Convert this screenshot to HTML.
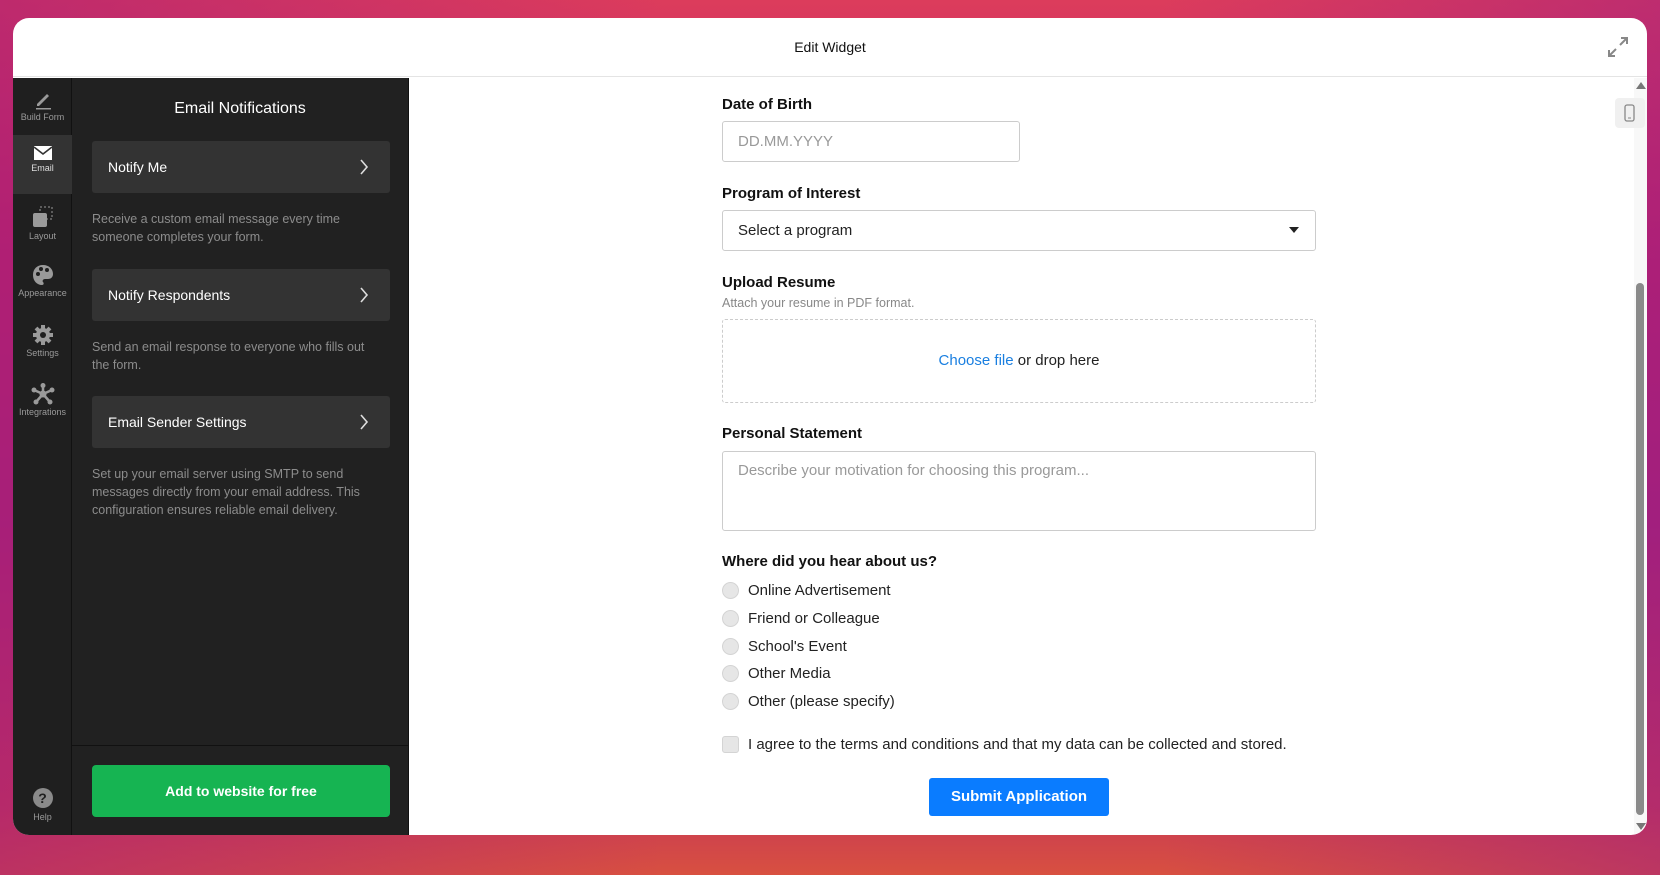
<!DOCTYPE html>
<html><head><meta charset="utf-8"><style>
*{box-sizing:border-box;margin:0;padding:0}
body{width:1660px;height:875px;overflow:hidden;font-family:"Liberation Sans",sans-serif;
background:linear-gradient(180deg,#dc3c5c 0%,#b8206e 30%,#a3207a 60%,#c83a55 92%,#d85040 100%);position:relative}
.bgl{position:absolute;inset:0;background:linear-gradient(90deg,rgba(170,30,120,.6),rgba(0,0,0,0) 40%,rgba(0,0,0,0) 70%,rgba(160,30,130,.5))}
.card{position:absolute;left:13px;top:18px;width:1634px;height:817px;background:#fff;border-radius:16px;overflow:hidden}
.hdr{height:59px;border-bottom:1px solid #e4e4e4;text-align:center;font-size:14px;line-height:59px;color:#111}
.icons{position:absolute;left:0;top:60px;width:59px;bottom:0;background:#1f1f1f;border-right:1px solid #111}
.ic{position:absolute;left:0;width:59px;text-align:center;color:#9a9a9a;font-size:9px}
.panel{position:absolute;left:59px;top:60px;width:337px;bottom:0;background:#212121;border-right:1px solid #111}
.ptitle{position:absolute;top:22px;width:100%;text-align:center;color:#fff;font-size:16px}
.item{position:absolute;left:20px;width:298px;height:52px;background:#333;border-radius:3px;color:#fff;font-size:14px;line-height:52px;padding-left:16px}
.item svg{position:absolute;right:21px;top:17px}
.desc{position:absolute;left:20px;width:290px;color:#8c8c8c;font-size:12.5px;line-height:18px}
.div{position:absolute;left:0;right:0;top:667px;border-top:1px solid #111}
.green{position:absolute;left:20px;top:687px;width:298px;height:52px;background:#16b452;border-radius:4px;color:#fff;font-weight:bold;font-size:14px;text-align:center;line-height:52px}
.f{position:absolute;left:709px;color:#111}
.lab{font-weight:bold;font-size:15px}
.inp{position:absolute;left:709px;border:1px solid #ccc;border-radius:3px;color:#999;font-size:15px;padding-left:15px}
.r{position:absolute;left:709px;font-size:15px;color:#222}
.r i{position:absolute;left:0;top:0;width:17px;height:17px;border-radius:50%;background:#e6e6e6;border:1px solid #d4d4d4}
.r span{position:absolute;left:26px;white-space:nowrap}
</style></head><body><div class="bgl"></div>
<div class="card">
<div class="hdr">Edit Widget</div>
<svg style="position:absolute;right:18px;top:18px" width="22" height="22" viewBox="0 0 22 22" fill="none" stroke="#888" stroke-width="2"><path d="M13 9l7-7M14 2h6v6M9 13l-7 7M2 14v6h6"/></svg>
<div class="icons">
 <div class="ic" style="top:12px"><svg width="20" height="20" viewBox="0 0 20 20"><path d="M4 14L14 4l2 2L6 16H4z" fill="#9a9a9a"/><rect x="3" y="18" width="15" height="1.5" fill="#9a9a9a"/></svg><div>Build Form</div></div>
 <div class="ic" style="top:57px;height:59px;background:#333;color:#ddd"><svg style="margin-top:10px" width="20" height="16" viewBox="0 0 20 16"><rect x="1" y="1" width="18" height="14" fill="#fff"/><path d="M1 2l9 7 9-7" stroke="#333" stroke-width="1.6" fill="none"/></svg><div>Email</div></div>
 <div class="ic" style="top:127px"><svg width="24" height="24" viewBox="0 0 24 24"><rect x="9" y="2" width="12" height="12" fill="none" stroke="#9a9a9a" stroke-dasharray="2 2"/><rect x="2" y="8" width="14" height="14" rx="2" fill="#9a9a9a"/></svg><div>Layout</div></div>
 <div class="ic" style="top:186px"><svg width="22" height="22" viewBox="0 0 22 22"><path d="M11 1C5 1 1 5 1 11s4 10 9 10c2 0 2-2 1-3s0-3 2-3h3c3 0 5-2 5-5 0-5-4-9-10-9z" fill="#9a9a9a"/><circle cx="6" cy="10" r="2" fill="#1f1f1f"/><circle cx="9" cy="5" r="2" fill="#1f1f1f"/><circle cx="15" cy="6" r="2" fill="#1f1f1f"/></svg><div>Appearance</div></div>
 <div class="ic" style="top:246px"><svg width="22" height="22" viewBox="0 0 22 22"><circle cx="11" cy="11" r="7" fill="#9a9a9a"/><g stroke="#9a9a9a" stroke-width="4"><path d="M11 1v20M1 11h20M4 4l14 14M18 4L4 18"/></g><circle cx="11" cy="11" r="3" fill="#1f1f1f"/></svg><div>Settings</div></div>
 <div class="ic" style="top:305px"><svg width="24" height="22" viewBox="0 0 24 22"><g stroke="#9a9a9a" stroke-width="2.5"><path d="M12 11L12 2M12 11L3 7M12 11L21 7M12 11L5 19M12 11L19 19"/></g><circle cx="12" cy="11" r="3.5" fill="#9a9a9a"/><circle cx="12" cy="2.5" r="2.5" fill="#9a9a9a"/><circle cx="3" cy="7" r="2.5" fill="#9a9a9a"/><circle cx="21" cy="7" r="2.5" fill="#9a9a9a"/><circle cx="5" cy="19" r="2.5" fill="#9a9a9a"/><circle cx="19" cy="19" r="2.5" fill="#9a9a9a"/></svg><div>Integrations</div></div>
 <div class="ic" style="top:710px"><div style="width:20px;height:20px;border-radius:50%;background:#8a8a8a;color:#1f1f1f;font-weight:bold;font-size:14px;line-height:20px;margin:0 auto 4px">?</div><div>Help</div></div>
</div>
<div class="panel">
 <div class="ptitle">Email Notifications</div>
 <div class="item" style="top:63px">Notify Me<svg width="10" height="18" viewBox="0 0 10 18"><path d="M2 2l6 7-6 7" stroke="#ddd" stroke-width="1.6" fill="none"/></svg></div>
 <div class="desc" style="top:132px">Receive a custom email message every time someone completes your form.</div>
 <div class="item" style="top:191px">Notify Respondents<svg width="10" height="18" viewBox="0 0 10 18"><path d="M2 2l6 7-6 7" stroke="#ddd" stroke-width="1.6" fill="none"/></svg></div>
 <div class="desc" style="top:260px">Send an email response to everyone who fills out the form.</div>
 <div class="item" style="top:318px">Email Sender Settings<svg width="10" height="18" viewBox="0 0 10 18"><path d="M2 2l6 7-6 7" stroke="#ddd" stroke-width="1.6" fill="none"/></svg></div>
 <div class="desc" style="top:387px">Set up your email server using SMTP to send messages directly from your email address. This configuration ensures reliable email delivery.</div>
 <div class="div"></div>
 <div class="green">Add to website for free</div>
</div>
<div class="f lab" style="top:78px">Date of Birth</div>
<div class="inp" style="top:103px;width:298px;height:41px;line-height:39px">DD.MM.YYYY</div>
<div class="f lab" style="top:167px">Program of Interest</div>
<div class="inp" style="top:192px;width:594px;height:41px;line-height:39px;color:#222">Select a program<svg style="position:absolute;right:16px;top:16px" width="10" height="6" viewBox="0 0 10 6"><path d="M0 0h10L5 6z" fill="#222"/></svg></div>
<div class="f lab" style="top:256px">Upload Resume</div>
<div class="f" style="top:278px;font-size:12.5px;color:#888">Attach your resume in PDF format.</div>
<div class="inp" style="top:301px;width:594px;height:84px;border:1px dashed #ccc;text-align:center;line-height:82px;color:#222;padding:0">
<span style="color:#1a7fe0">Choose file</span> or drop here</div>
<div class="f lab" style="top:407px">Personal Statement</div>
<div class="inp" style="top:433px;width:594px;height:80px;padding-top:10px">Describe your motivation for choosing this program...</div>
<div class="f lab" style="top:535px">Where did you hear about us?</div>
<div class="r" style="top:564px"><i></i><span>Online Advertisement</span></div>
<div class="r" style="top:592px"><i></i><span>Friend or Colleague</span></div>
<div class="r" style="top:620px"><i></i><span>School's Event</span></div>
<div class="r" style="top:647px"><i></i><span>Other Media</span></div>
<div class="r" style="top:675px"><i></i><span>Other (please specify)</span></div>
<div class="r" style="top:718px"><i style="border-radius:3px"></i><span>I agree to the terms and conditions and that my data can be collected and stored.</span></div>
<div style="position:absolute;left:916px;top:760px;width:180px;height:38px;background:#0a7cff;border-radius:3px;color:#fff;font-weight:bold;font-size:15px;text-align:center;line-height:38px">Submit Application</div>
<div style="position:absolute;left:1621px;top:60px;width:13px;bottom:0;background:#f8f8f8"></div>
<svg style="position:absolute;left:1623px;top:64px" width="10" height="7"><path d="M0 7L5 0l5 7z" fill="#777"/></svg>
<div style="position:absolute;left:1623px;top:265px;width:8px;height:532px;background:#8a8a8a;border-radius:4px"></div>
<svg style="position:absolute;left:1623px;top:805px" width="10" height="7"><path d="M0 0h10L5 7z" fill="#777"/></svg>
<div style="position:absolute;left:1602px;top:80px;width:30px;height:30px;background:#f0f0f0;border-radius:4px"><svg style="position:absolute;left:9px;top:6px" width="11" height="18" viewBox="0 0 11 18"><rect x="1" y="1" width="9" height="16" rx="2" fill="none" stroke="#888" stroke-width="1.3"/><path d="M4 14h3" stroke="#888"/></svg></div>
</div>
</body></html>
